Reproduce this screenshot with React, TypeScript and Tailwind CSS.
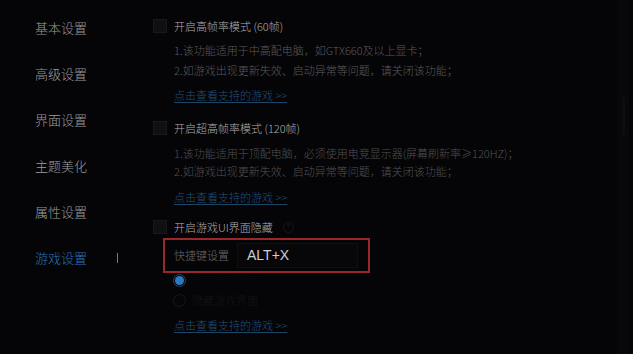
import React from "react";

const menu = ["基本设置", "高级设置", "界面设置", "主题美化", "属性设置", "游戏设置"];

const font = { fontFamily: '"Noto Sans CJK SC", "Noto Sans", "Liberation Sans", sans-serif' };

function Check() {
  return <span className="w-[14px] h-[14px] shrink-0 bg-[#101012] border border-[#18181b]" />;
}

function Link({ mt }: { mt: string }) {
  return (
    <div className={mt + " h-[20px] flex items-center pl-[21px]"}>
      <span className="text-[11px] text-[#22507a] underline underline-offset-2 decoration-[#1d4566]">
        点击查看支持的游戏 &gt;&gt;
      </span>
    </div>
  );
}

export default function App() {
  return (
    <div className="w-[633px] h-[354px] bg-[#050507] flex overflow-hidden" style={font}>
      {/* sidebar */}
      <div className="w-[153px] shrink-0 pt-[5px]">
        {menu.map((m, i) => (
          <div key={m} className="h-[46px] flex items-center pl-[35px] relative">
            <span className={"text-[13px] font-light " + (i === 5 ? "text-[#2a74b8]" : "text-[#9d9d9f]")}>{m}</span>
            {i === 5 && <span className="absolute left-[117px] top-[18px] w-[1px] h-[10px] bg-[#3a86cc]" />}
          </div>
        ))}
      </div>

      {/* content */}
      <div className="flex-1 flex flex-col font-light">
        <div className="mt-[16px] h-[20px] flex items-center gap-[7px]">
          <Check />
          <span className="text-[11px] text-[#aeaeb0]">开启高帧率模式 (60帧)</span>
        </div>
        <div className="mt-[4px] pl-[21px] text-[11px] leading-[20px] text-[#5a5a5e]">
          <div>1.该功能适用于中高配电脑，如GTX660及以上显卡；</div>
          <div>2.如游戏出现更新失效、启动异常等问题，请关闭该功能；</div>
        </div>
        <Link mt="mt-[5px]" />

        <div className="mt-[13px] h-[20px] flex items-center gap-[7px]">
          <Check />
          <span className="text-[11px] text-[#aeaeb0]">开启超高帧率模式 (120帧)</span>
        </div>
        <div className="mt-[6px] pl-[21px] text-[11px] leading-[18px] text-[#505054]">
          <div>1.该功能适用于顶配电脑，必须使用电竞显示器(屏幕刷新率≥120HZ)；</div>
          <div>2.如游戏出现更新失效、启动异常等问题，请关闭该功能；</div>
        </div>
        <Link mt="mt-[7px]" />

        <div className="mt-[10px] h-[20px] flex items-center gap-[7px]">
          <Check />
          <span className="text-[11px] text-[#aeaeb0]">开启游戏UI界面隐藏</span>
          <span className="ml-[3px] w-[11px] h-[11px] rounded-full border border-[#18181c] text-[8px] leading-none flex items-center justify-center text-[#202024]">
            ?
          </span>
        </div>

        <div className="mt-[1px] ml-[10px] w-[207px] h-[35px] border-2 border-[#9c2729] flex items-center pl-[9px]">
          <span className="text-[11px] text-[#68686c]">快捷键设置</span>
          <div className="ml-[8px] w-[121px] h-[25px] border border-[#0f0f13] bg-[#07070a] flex items-center pl-[9px]">
            <span className="text-[14px] text-[#cfcfd1]" style={{ fontFamily: '"Liberation Sans", sans-serif' }}>
              ALT+X
            </span>
          </div>
        </div>

        <div className="h-[14px] flex items-center pl-[20px] gap-[6px]">
          <span className="w-[13px] h-[13px] rounded-full border border-[#1b4570] flex items-center justify-center">
            <span className="w-[9px] h-[9px] rounded-full bg-[#2c78c4]" />
          </span>
          <span className="text-[11px] text-[#09090c]">显示游戏界面</span>
        </div>
        <div className="mt-[6px] h-[14px] flex items-center pl-[20px] gap-[6px]">
          <span className="w-[13px] h-[13px] rounded-full border border-[#19191d]" />
          <span className="text-[11px] text-[#141418]">隐藏游戏界面</span>
        </div>
        <Link mt="mt-[8px]" />
      </div>

      {/* scrollbar */}
      <div className="w-[12px] shrink-0 mr-[4px] bg-[#08080a] pt-[97px] flex justify-center">
        <div className="w-[3px] h-[38px] bg-[#0d0d10]" />
      </div>
    </div>
  );
}
